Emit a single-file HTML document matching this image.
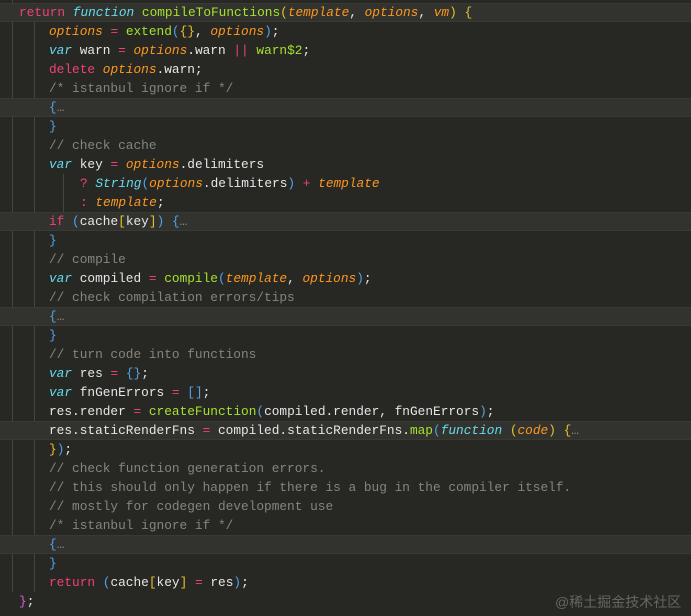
<!DOCTYPE html>
<html><head><meta charset="utf-8"><style>
body{margin:0;width:691px;height:616px;background:#272824;overflow:hidden;position:relative;font-family:"Liberation Mono",monospace;font-size:12.8px;}
.l{position:absolute;left:0;width:691px;height:19px;line-height:19px;white-space:pre;color:#e6e6e6;}
.hl{background:#32332e;box-shadow:inset 0 1px 0 #393a34,inset 0 -1px 0 #393a34;}
.g{position:absolute;width:1px;background:#44453f;}
.k{color:#f0407a}.s{color:#66d9ef;font-style:italic}.p{color:#fd971f;font-style:italic}
.f{color:#a6e22e}.c{color:#85857c}.o{color:#f0407a}.y{color:#e6c12e}.b{color:#4fa3e6}.m{color:#d55fd6}
.e{color:#8a8a80}
.wm{position:absolute;left:555px;top:592px;font-family:"Liberation Sans","Noto Sans CJK SC",sans-serif;font-size:14px;color:#66665f;}
</style></head><body>
<div class="g" style="left:12px;top:0;height:592px"></div>
<div class="g" style="left:34px;top:22px;height:570px"></div>
<div class="g" style="left:63px;top:174px;height:38px"></div>
<div class="l hl" style="top:3px;padding-left:19px"><span class="k">return</span> <span class="s">function</span> <span class="f">compileToFunctions</span><span class="y">(</span><span class="p">template</span>, <span class="p">options</span>, <span class="p">vm</span><span class="y">)</span> <span class="y">{</span></div>
<div class="l" style="top:22px;padding-left:49px"><span class="p">options</span> <span class="o">=</span> <span class="f">extend</span><span class="b">(</span><span class="y">{}</span>, <span class="p">options</span><span class="b">)</span>;</div>
<div class="l" style="top:41px;padding-left:49px"><span class="s">var</span> warn <span class="o">=</span> <span class="p">options</span>.warn <span class="o">||</span> <span class="f">warn$2</span>;</div>
<div class="l" style="top:60px;padding-left:49px"><span class="k">delete</span> <span class="p">options</span>.warn;</div>
<div class="l" style="top:79px;padding-left:49px"><span class="c">/* istanbul ignore if */</span></div>
<div class="l hl" style="top:98px;padding-left:49px"><span class="b">{</span><span class="e">…</span></div>
<div class="l" style="top:117px;padding-left:49px"><span class="b">}</span></div>
<div class="l" style="top:136px;padding-left:49px"><span class="c">// check cache</span></div>
<div class="l" style="top:155px;padding-left:49px"><span class="s">var</span> key <span class="o">=</span> <span class="p">options</span>.delimiters</div>
<div class="l" style="top:174px;padding-left:80px"><span class="o">?</span> <span class="s">String</span><span class="b">(</span><span class="p">options</span>.delimiters<span class="b">)</span> <span class="o">+</span> <span class="p">template</span></div>
<div class="l" style="top:193px;padding-left:80px"><span class="o">:</span> <span class="p">template</span>;</div>
<div class="l hl" style="top:212px;padding-left:49px"><span class="k">if</span> <span class="b">(</span>cache<span class="y">[</span>key<span class="y">]</span><span class="b">)</span> <span class="b">{</span><span class="e">…</span></div>
<div class="l" style="top:231px;padding-left:49px"><span class="b">}</span></div>
<div class="l" style="top:250px;padding-left:49px"><span class="c">// compile</span></div>
<div class="l" style="top:269px;padding-left:49px"><span class="s">var</span> compiled <span class="o">=</span> <span class="f">compile</span><span class="b">(</span><span class="p">template</span>, <span class="p">options</span><span class="b">)</span>;</div>
<div class="l" style="top:288px;padding-left:49px"><span class="c">// check compilation errors/tips</span></div>
<div class="l hl" style="top:307px;padding-left:49px"><span class="b">{</span><span class="e">…</span></div>
<div class="l" style="top:326px;padding-left:49px"><span class="b">}</span></div>
<div class="l" style="top:345px;padding-left:49px"><span class="c">// turn code into functions</span></div>
<div class="l" style="top:364px;padding-left:49px"><span class="s">var</span> res <span class="o">=</span> <span class="b">{}</span>;</div>
<div class="l" style="top:383px;padding-left:49px"><span class="s">var</span> fnGenErrors <span class="o">=</span> <span class="b">[]</span>;</div>
<div class="l" style="top:402px;padding-left:49px">res.render <span class="o">=</span> <span class="f">createFunction</span><span class="b">(</span>compiled.render, fnGenErrors<span class="b">)</span>;</div>
<div class="l hl" style="top:421px;padding-left:49px">res.staticRenderFns <span class="o">=</span> compiled.staticRenderFns.<span class="f">map</span><span class="b">(</span><span class="s">function</span> <span class="y">(</span><span class="p">code</span><span class="y">)</span> <span class="y">{</span><span class="e">…</span></div>
<div class="l" style="top:440px;padding-left:49px"><span class="y">}</span><span class="b">)</span>;</div>
<div class="l" style="top:459px;padding-left:49px"><span class="c">// check function generation errors.</span></div>
<div class="l" style="top:478px;padding-left:49px"><span class="c">// this should only happen if there is a bug in the compiler itself.</span></div>
<div class="l" style="top:497px;padding-left:49px"><span class="c">// mostly for codegen development use</span></div>
<div class="l" style="top:516px;padding-left:49px"><span class="c">/* istanbul ignore if */</span></div>
<div class="l hl" style="top:535px;padding-left:49px"><span class="b">{</span><span class="e">…</span></div>
<div class="l" style="top:554px;padding-left:49px"><span class="b">}</span></div>
<div class="l" style="top:573px;padding-left:49px"><span class="k">return</span> <span class="b">(</span>cache<span class="y">[</span>key<span class="y">]</span> <span class="o">=</span> res<span class="b">)</span>;</div>
<div class="l" style="top:592px;padding-left:19px"><span class="m">}</span>;</div>
<div class="wm">@稀土掘金技术社区</div>
</body></html>
